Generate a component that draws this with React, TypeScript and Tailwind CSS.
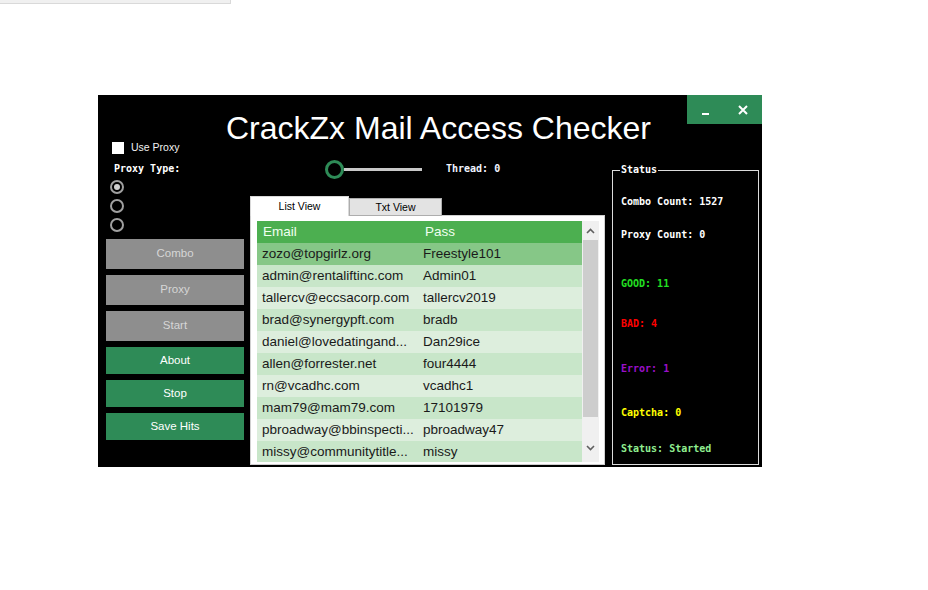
import React from "react";

const rows: [string, string][] = [
  ["zozo@topgirlz.org", "Freestyle101"],
  ["admin@rentaliftinc.com", "Admin01"],
  ["tallercv@eccsacorp.com", "tallercv2019"],
  ["brad@synergypft.com", "bradb"],
  ["daniel@lovedatingand...", "Dan29ice"],
  ["allen@forrester.net", "four4444"],
  ["rn@vcadhc.com", "vcadhc1"],
  ["mam79@mam79.com", "17101979"],
  ["pbroadway@bbinspecti...", "pbroadway47"],
  ["missy@communitytitle...", "missy"],
];

function rowBg(i: number) {
  if (i === 0) return "bg-[#86c787]";
  return i % 2 === 1 ? "bg-[#c8e6c9]" : "bg-[#ddeedd]";
}

function Radio({ checked }: { checked?: boolean }) {
  return (
    <div className="w-[14px] h-[14px] rounded-full border-2 border-[#a0a0a0] bg-black flex items-center justify-center">
      {checked && <div className="w-[6px] h-[6px] rounded-full bg-[#d0d0d0]" />}
    </div>
  );
}

function GrayBtn({ label }: { label: string }) {
  return (
    <div className="w-[138px] h-[30px] bg-[#8e8e8e] text-[#d6d6d6] flex items-center justify-center text-[11.5px]">
      {label}
    </div>
  );
}

function GreenBtn({ label }: { label: string }) {
  return (
    <div className="w-[138px] h-[27px] bg-[#2e8b57] text-white flex items-center justify-center text-[11.5px]">
      {label}
    </div>
  );
}

export default function App() {
  return (
    <div className="w-[928px] h-[590px] bg-white font-['Liberation_Sans',Arial,sans-serif] overflow-hidden">
      <div className="h-[4px] w-[231px] bg-[#f0f0f0] border-r border-b border-[#d9d9d9]" />
      <div className="ml-[98px] mt-[91px] w-[664px] h-[372px] bg-black relative">
        {/* window buttons */}
        <div className="absolute top-0 right-0 flex bg-[#2e8b57] h-[29px]">
          <div className="w-[37px] h-[29px] flex items-center justify-center">
            <div className="w-[7px] h-[2px] bg-white mt-[8px]" />
          </div>
          <div className="w-[38px] h-[29px] flex items-center justify-center">
            <svg width="10" height="10" viewBox="0 0 10 10">
              <path d="M1 1 L9 9 M9 1 L1 9" stroke="white" strokeWidth="2" />
            </svg>
          </div>
        </div>

        {/* title */}
        <div className="h-[45px] pt-[17px] pl-[128px]">
          <div className="text-[32px] leading-[32px] text-white whitespace-nowrap">
            CrackZx Mail Access Checker
          </div>
        </div>

        <div className="flex items-start">
          {/* left column */}
          <div className="w-[152px] flex flex-col">
            <div className="mt-[1px] flex items-center h-[14px] pl-[14px]">
              <div className="w-[12px] h-[12px] bg-white" />
              <span className="ml-[7px] text-[10.5px] text-[#f2f2f2]">Use Proxy</span>
            </div>
            <div className="mt-[8px] pl-[16px] h-[12px] leading-[12px] font-['DejaVu_Sans_Mono',monospace] font-bold text-[10px] text-white">
              Proxy Type:
            </div>
            <div className="mt-[5px] pl-[12px] flex flex-col gap-[5px]">
              <Radio checked />
              <Radio />
              <Radio />
            </div>
            <div className="mt-[7px] pl-[8px] flex flex-col gap-[6px]">
              <GrayBtn label="Combo" />
              <GrayBtn label="Proxy" />
              <GrayBtn label="Start" />
              <GreenBtn label="About" />
              <GreenBtn label="Stop" />
              <GreenBtn label="Save Hits" />
            </div>
          </div>

          {/* center column */}
          <div className="w-[355px] flex flex-col">
            <div className="mt-[20px] h-[19px] flex items-center">
              <div className="ml-[75px] w-[19px] h-[19px] rounded-full border-[3px] border-[#2e8b57] bg-black" />
              <div className="w-[78px] h-[3px] bg-[#c8c8c8]" />
              <div className="ml-[24px] font-['DejaVu_Sans_Mono',monospace] font-bold text-[10px] text-[#f0f4ff] -mt-[2px]">
                Thread: 0
              </div>
            </div>
            <div className="mt-[17px] flex items-start h-[19px] relative z-10">
              <div className="w-[99px] h-[20px] bg-white border-t border-l border-r border-[#d9d9d9] flex items-center justify-center text-[10.5px] text-black">
                List View
              </div>
              <div className="mt-[2px] w-[93px] h-[18px] bg-[#e3e3e3] border border-[#adadad] flex items-center justify-center text-[10.5px] text-black pt-[1px]">
                Txt View
              </div>
            </div>
            <div className="h-[250px] w-[355px] bg-white border border-[#d0d0d0] pt-[5px] pl-[6px]">
              <div className="flex h-[241px] overflow-hidden">
                <div className="w-[325px] flex flex-col text-[13.5px]">
                  <div className="flex h-[22px] shrink-0 items-center bg-[#4caf50] text-[#f0fff0]">
                    <div className="w-[162px] pl-[6px]">Email</div>
                    <div className="pl-[6px]">Pass</div>
                  </div>
                  {rows.map((r, i) => (
                    <div key={i} className={`flex h-[22px] shrink-0 items-center ${rowBg(i)} text-[#1a1a1a]`}>
                      <div className="w-[162px] pl-[5px] whitespace-nowrap overflow-hidden">{r[0]}</div>
                      <div className="pl-[4px] whitespace-nowrap">{r[1]}</div>
                    </div>
                  ))}
                </div>
                <div className="w-[17px] h-[241px] bg-[#f0f0f0] flex flex-col items-center">
                  <div className="h-[19px] flex items-center justify-center">
                    <svg width="9" height="6" viewBox="0 0 9 6">
                      <path d="M1 5 L4.5 1.5 L8 5" stroke="#606060" strokeWidth="1.6" fill="none" />
                    </svg>
                  </div>
                  <div className="w-[15px] h-[177px] bg-[#cdcdcd]" />
                  <div className="flex-1" />
                  <div className="h-[19px] flex items-center justify-center mb-[5px]">
                    <svg width="9" height="6" viewBox="0 0 9 6">
                      <path d="M1 1 L4.5 4.5 L8 1" stroke="#606060" strokeWidth="1.6" fill="none" />
                    </svg>
                  </div>
                </div>
              </div>
            </div>
          </div>

          {/* right column */}
          <div className="ml-[7px] mt-[30px] w-[147px] h-[295px] border border-[#dcdcdc] relative font-['DejaVu_Sans_Mono',monospace] font-bold text-[10px]">
            <span className="absolute -top-[7px] left-[7px] bg-black px-[1px] leading-[12px] text-white">Status</span>
            <div className="flex flex-col pl-[8px] leading-[12px]">
              <div className="mt-[25px] text-white">Combo Count: 1527</div>
              <div className="mt-[21px] text-white">Proxy Count: 0</div>
              <div className="mt-[37px] text-[#22e022]">GOOD: 11</div>
              <div className="mt-[28px] text-[#ff0000]">BAD: 4</div>
              <div className="mt-[33px] text-[#9a10c8]">Error: 1</div>
              <div className="mt-[32px] text-[#ffff00]">Captcha: 0</div>
              <div className="mt-[24px] text-[#90ee90]">Status: Started</div>
            </div>
          </div>
        </div>
      </div>
    </div>
  );
}
